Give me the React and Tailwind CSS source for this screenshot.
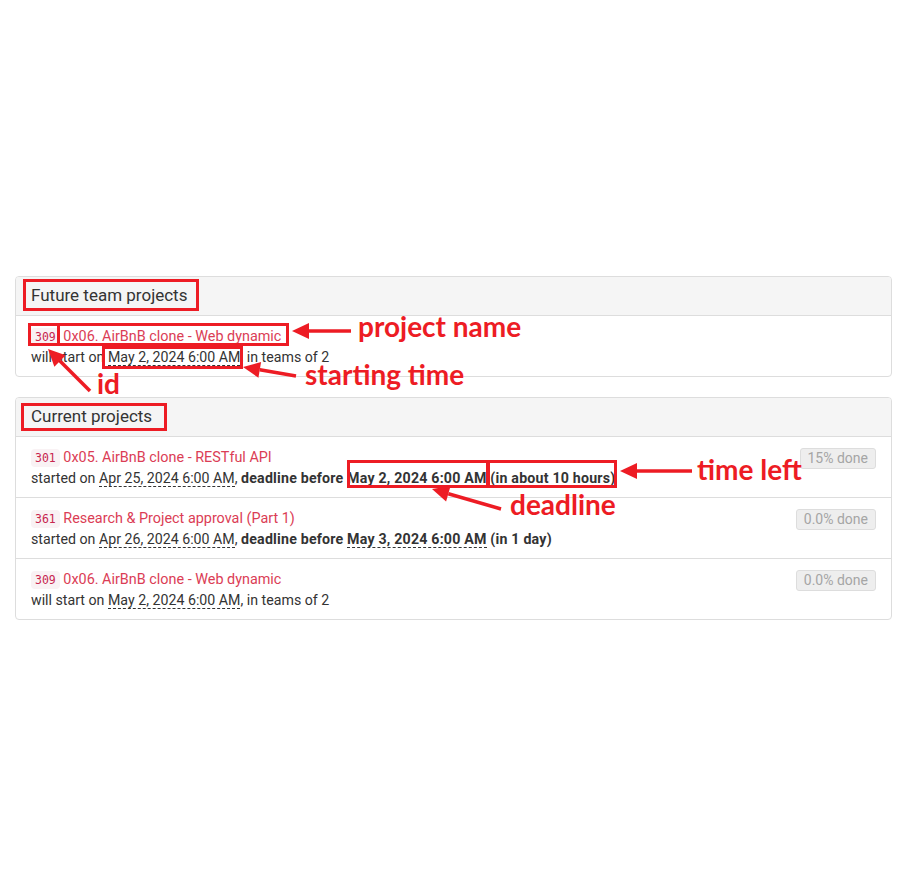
import React from "react";

const RED = "#ed1c24";

function Code({ children }) {
  return (
    <code className="rounded-[4px] bg-[#f9f2f4] px-[4px] py-[2px] font-['DejaVu_Sans_Mono',monospace] text-[11.5px] text-[#c7254e]">
      {children}
    </code>
  );
}

function Date({ children }) {
  return <span className="border-b border-dashed border-[#333]">{children}</span>;
}

function Badge({ children }) {
  return (
    <span className="inline-block h-[21px] rounded-[3px] border border-[#ddd] bg-[#eeeeee] px-[7px] text-[14px] leading-[19px] text-[#a5a5a5]">
      {children}
    </span>
  );
}

function Row({ id, name, badge, children, last }) {
  return (
    <div className={`flex items-start justify-between px-[15px] pt-[10px] ${last ? "h-[60px]" : "h-[61px] border-b border-[#ddd]"}`}>
      <div className="leading-[20px]">
        <div>
          <Code>{id}</Code> <a className="text-[14.4px] text-[#db3d55]">{name}</a>
        </div>
        <div>{children}</div>
      </div>
      {badge && <div className="flex pt-[1px]"><Badge>{badge}</Badge></div>}
    </div>
  );
}

function Panel({ title, children }) {
  return (
    <div className="overflow-hidden rounded-[4px] border border-[#ddd]">
      <div className="flex h-[39px] items-center border-b border-[#ddd] bg-[#f5f5f5] px-[15px] text-[17px] text-[#333]">
        {title}
      </div>
      {children}
    </div>
  );
}

function Arrow({ x1, y1, x2, y2 }) {
  // x2,y2 is the tip
  const dx = x2 - x1;
  const dy = y2 - y1;
  const len = Math.hypot(dx, dy);
  const ux = dx / len;
  const uy = dy / len;
  const hl = 17;
  const hw = 8;
  const bx = x2 - ux * hl;
  const by = y2 - uy * hl;
  const pts = `${x2},${y2} ${bx - uy * hw},${by + ux * hw} ${bx + uy * hw},${by - ux * hw}`;
  return (
    <g>
      <line x1={x1} y1={y1} x2={bx} y2={by} stroke={RED} strokeWidth="3.5" />
      <polygon points={pts} fill={RED} />
    </g>
  );
}

function Box({ className }) {
  return <div className={`absolute border-[3px] border-[#ed1c24] ${className}`} />;
}

export default function App() {
  return (
    <div className="relative h-[893px] w-[912px] bg-white font-['Roboto',sans-serif] text-[14.2px] text-[#333]">
      <div className="flex w-[892px] flex-col gap-[20px] pl-[15px] pt-[276px]">
        <Panel title="Future team projects">
          <Row id="309" name="0x06. AirBnB clone - Web dynamic" last>
            will start on <Date>May 2, 2024 6:00 AM</Date>, in teams of 2
          </Row>
        </Panel>

        <Panel title="Current projects">
          <Row id="301" name="0x05. AirBnB clone - RESTful API" badge="15% done">
            started on <Date>Apr 25, 2024 6:00 AM</Date>,{" "}
            <b className="font-bold tracking-[0.2px]">
              deadline before <Date>May 2, 2024 6:00 AM</Date> (in about 10 hours)
            </b>
          </Row>
          <Row id="361" name="Research & Project approval (Part 1)" badge="0.0% done">
            started on <Date>Apr 26, 2024 6:00 AM</Date>,{" "}
            <b className="font-bold tracking-[0.2px]">
              deadline before <Date>May 3, 2024 6:00 AM</Date> (in 1 day)
            </b>
          </Row>
          <Row id="309" name="0x06. AirBnB clone - Web dynamic" badge="0.0% done" last>
            will start on <Date>May 2, 2024 6:00 AM</Date>, in teams of 2
          </Row>
        </Panel>
      </div>

      {/* annotations */}
      <Box className="left-[23px] top-[279px] h-[32px] w-[176px]" />
      <Box className="left-[28px] top-[323px] h-[23px] w-[32px]" />
      <Box className="left-[57px] top-[323px] h-[23px] w-[232px]" />
      <Box className="left-[102px] top-[346px] h-[23px] w-[141px]" />
      <Box className="left-[21px] top-[403px] h-[28px] w-[146px]" />
      <Box className="left-[347px] top-[460px] h-[28px] w-[142px]" />
      <Box className="left-[487px] top-[460px] h-[28px] w-[130px]" />

      <svg className="pointer-events-none absolute left-0 top-0" width="912" height="893">
        <Arrow x1={351} y1={331} x2={292} y2={331} />
        <Arrow x1={296} y1={376} x2={243} y2={367} />
        <Arrow x1={90} y1={391} x2={48} y2={349} />
        <Arrow x1={501} y1={509} x2={432} y2={489} />
        <Arrow x1={692} y1={471} x2={620} y2={471} />
        <g fill={RED} fontFamily="Lato, 'Liberation Sans', sans-serif" fontWeight="700" fontSize="28">
          <text x="358" y="337">project name</text>
          <text x="305" y="385">starting time</text>
          <text x="97" y="394">id</text>
          <text x="697" y="480">time left</text>
          <text x="510" y="515">deadline</text>
        </g>
      </svg>
    </div>
  );
}
